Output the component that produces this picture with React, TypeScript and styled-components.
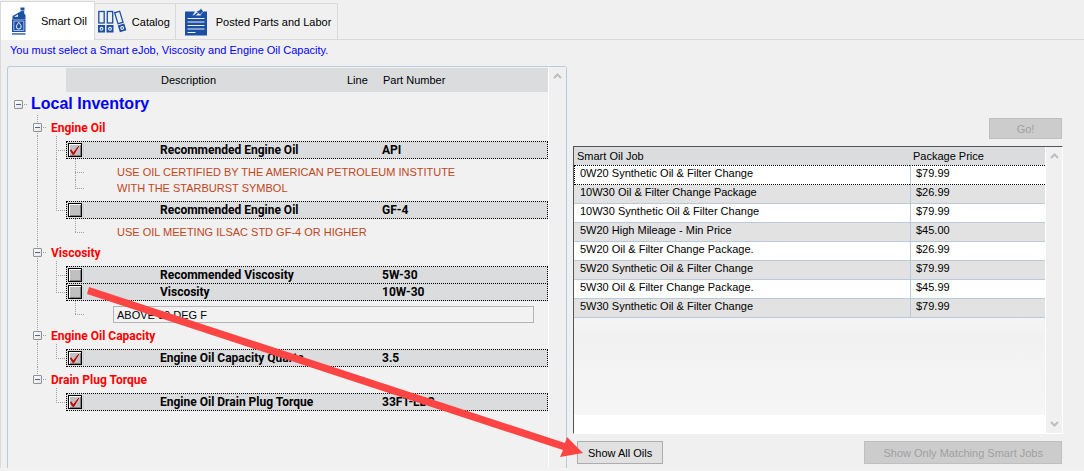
import React, { useState } from 'react';
import styled, { createGlobalStyle, css } from 'styled-components';

const GlobalStyle = createGlobalStyle`
  *, *::before, *::after { box-sizing: border-box; }
  body {
    margin: 0;
    background: #f0f0f0;
    color: #000;
    font: 11px/16px "Liberation Sans", Arial, sans-serif;
  }
  button, input { font: inherit; color: inherit; margin: 0; }
`;

/* ---------- window frame and tabs ---------- */

const Page = styled.div`
  position: relative;
  display: flex;
  flex-direction: column;
  min-height: 100vh;
  padding-bottom: 3px;
  background: #f2f2f2;
`;

const TabBar = styled.div`
  display: flex;
  align-items: flex-end;
  height: 40px;
  background: #f0f0f0;
  box-shadow: inset 0 -1px #d9d9d9;
`;

const Tab = styled.button<{ $active?: boolean }>`
  display: flex;
  align-items: center;
  height: 37px;
  padding: 0 5px 0 3px;
  border: 1px solid #d9d9d9;
  border-left: 0;
  background: #f0f0f0;
  gap: 4px;
  white-space: nowrap;
  ${(p) =>
    p.$active &&
    css`
      height: 39px;
      padding: 0 7px 0 8px;
      border-left: 1px solid #d9d9d9;
      border-bottom: 0;
      background: #fff;
      gap: 12px;
    `}
`;

const WideTab = styled(Tab)`
  padding: 0 6px 0 9px;
  gap: 8px;
`;

const TabPage = styled.main`
  flex: 1;
  display: flex;
  flex-direction: column;
  border-left: 1px solid #d9d9d9;
  background: #f0f0f0;
`;

const Message = styled.p`
  margin: 0;
  padding: 2px 9px 8px;
  color: #0000ff;
`;

const Columns = styled.div`
  flex: 1;
  display: flex;
`;

/* ---------- inventory tree ---------- */

const TreePanel = styled.section`
  flex: 0 1 560px;
  display: flex;
  margin-left: 6px;
  border: 1px solid #b8cbdc;
  border-bottom: 0;
  border-radius: 3px 3px 0 0;
  background: #f1f1f1;
`;

const Tree = styled.div`
  flex: 1;
  min-width: 0;
  padding: 1px 0 0 1px;
`;

const fields = css`
  display: grid;
  grid-template-columns: 92px 186fr 36px 165fr;
  align-items: center;
`;

const TreeHeader = styled.div`
  ${fields}
  height: 24px;
  margin-left: 57px;
  padding: 0 0 0 3px;
  background: #dadcde;
`;

const Line = styled.div`
  display: flex;
`;

const dots = (dir: string) =>
  `repeating-linear-gradient(${dir}, #a0a0a0 0 1px, transparent 1px 2px)`;

const Guide = styled.span<{ $down?: 'full' | 'end'; $across?: number }>`
  flex: 0 0 19px;
  background-repeat: no-repeat;
  background-image: ${(p) => (p.$down ? dots('to bottom') : 'none')},
    ${(p) => (p.$across !== undefined ? dots('to right') : 'none')};
  background-size: 1px ${(p) => (p.$down === 'end' ? `${p.$across}px` : '100%')}, 10px 1px;
  background-position: 9px 0, 9px ${(p) => p.$across ?? 0}px;
`;

const ExpanderGuide = styled(Guide)`
  padding: 8px 0 0 5px;
  line-height: 0;
`;

const Expander = styled.button`
  width: 9px;
  height: 9px;
  padding: 0;
  border: 1px solid #919191;
  border-radius: 1px;
  background: linear-gradient(#4b63a7, #4b63a7) center / 5px 1px no-repeat,
    linear-gradient(135deg, #fff, #e2e2e2);
`;

const Root = styled.h1`
  margin: 0;
  padding-left: 3px;
  color: #0000ff;
  font-size: 16px;
  font-weight: 700;
  line-height: 23px;
`;

const GroupName = styled.h2`
  margin: 0;
  padding: 5px 0 0 4px;
  color: #ff0000;
  font: 700 12px/16px Roboto, sans-serif;
`;

const Item = styled.label<{ $joined?: boolean }>`
  ${fields}
  flex: 1;
  height: ${(p) => (p.$joined ? '17px' : '18px')};
  margin-top: ${(p) => (p.$joined ? '0' : '5px')};
  padding-left: 1px;
  border: 1px dotted #000;
  border-top-width: ${(p) => (p.$joined ? '0' : '1px')};
  background: #dadcde;
  font: 700 12px/16px Roboto, sans-serif;
`;

const Check = styled.span`
  display: grid;
  width: 16px;
  height: 14px;
  border-right: 1px solid #c3d3d3;

  > * { grid-area: 1 / 1; }
  > svg { z-index: 1; pointer-events: none; visibility: hidden; }
  > input:checked + svg { visibility: visible; }
`;

const CheckInput = styled.input`
  appearance: none;
  width: 14px;
  height: 14px;
  border: 1px solid #000;
  background: #c0c0c0;
  box-shadow: inset 1px 1px #fff, inset -1px -1px #808080;
`;

const PartNumber = styled.span`
  grid-column: 4;
`;

const Notes = styled.div<{ $first?: boolean }>`
  flex: 1;
  padding: ${(p) => (p.$first ? '5px' : '0')} 0 0 32px;
  color: #c2461b;
`;

const BoxedNote = styled.input`
  flex: 1;
  min-width: 0;
  height: 17px;
  margin: 5px 14px 0 28px;
  padding: 0 3px;
  border: 1px solid #b4b4b4;
  background: #f2f2f2;
`;

/* ---------- scroll bar ---------- */

const ScrollBar = styled.div`
  display: flex;
  flex-direction: column;
  justify-content: space-between;
  align-items: center;
  flex: 0 0 17px;
  padding: 5px 0;
  border-left: 1px solid #fff;
  background: #f0f0f0;
`;

const TreeScrollBar = styled(ScrollBar)`
  flex-basis: 18px;
`;

const Chevron = ({ down }: { down?: boolean }) => (
  <svg width="9" height="8" viewBox="0 0 9 8" fill="none" stroke="#bdbdbd" strokeWidth="2">
    <path d={down ? 'M1 2 L4.5 5.5 L8 2' : 'M1 6 L4.5 2.5 L8 6'} />
  </svg>
);

/* ---------- oil jobs ---------- */

const JobsPanel = styled.section`
  flex: 1;
  display: flex;
  flex-direction: column;
  min-width: 0;
  padding: 52px 21px 4px 6px;
`;

const PushButton = styled.button<{ $wide?: boolean }>`
  height: 23px;
  padding: 0 ${(p) => (p.$wide ? '18px' : '10px')};
  border: 1px solid #adadad;
  background: #e1e1e1;
  white-space: nowrap;

  &:disabled {
    border-color: #bfbfbf;
    background: #cccccc;
    color: #a0a0a0;
  }
`;

const GoButton = styled(PushButton)`
  align-self: flex-end;
  width: 73px;
  height: 21px;
  margin-right: 1px;
`;

const JobsBox = styled.div`
  flex: 1;
  display: flex;
  margin-top: 7px;
  border: 1px solid #555;
  border-right-color: #fff;
  border-bottom-color: #fff;
  background: #fff;
`;

const JobsArea = styled.div`
  flex: 1;
  display: flex;
  flex-direction: column;
  min-width: 0;
  padding-bottom: 18px;
`;

const JobsFill = styled.div`
  flex: 1;
  background: linear-gradient(#f5f5f5, #f1f1f1 20%, #f6f6f6);
`;

const JobsTable = styled.table`
  width: 100%;
  border-collapse: separate;
  border-spacing: 0;
  table-layout: fixed;

  th {
    height: 18px;
    padding: 0 3px;
    background: #dadcde;
    font-weight: 400;
    text-align: left;
  }
  th:last-child { width: 135px; }
  td {
    height: 19px;
    padding: 0 6px 4px;
    border-bottom: 1px solid #b9cadb;
    line-height: 14px;
  }
  td:last-child { border-left: 1px solid #b9cadb; padding-left: 5px; }
  tbody tr:nth-child(even) { background: #e2e2e2; }
  tbody tr:first-child td {
    border-top: 1px dotted #000;
    border-bottom: 1px dotted #000;
  }
  tbody tr:first-child td:first-child { border-left: 1px dotted #000; padding-left: 5px; }
`;

const Actions = styled.div`
  display: flex;
  justify-content: space-between;
  padding: 7px 1px 0 4px;
`;

const ArrowLayer = styled.svg`
  position: absolute;
  left: 0;
  top: 0;
  pointer-events: none;
`;

/* ---------- icons ---------- */

const BLUE = '#1b4fa3';

const OilIcon = () => (
  <svg width="20" height="30" viewBox="0 0 20 30" fill={BLUE}>
    <path d="M11.500 1.500h4v3h-4z" />
    <path d="M12.200 5h3v2.500L16.500 9v4h-13V10L9 7z" />
    <path d="M5 10.800 9 8.500v2.300z" fill="#fff" />
    <path d="M3 13.300h13.500V26H3z" />
    <path d="M4.800 15h10v9.500h-10z" fill="none" stroke="#b9c8e6" strokeWidth=".9" />
    <path d="M9.800 16.300c1.600 2.200 2.400 3.200 2.400 4.400a2.400 2.400 0 0 1-4.800 0c0-1.200.800-2.200 2.400-4.400z" fill="none" stroke="#fff" strokeWidth="1" />
    <path d="M3 27.300h13.500v1.300H3z" />
  </svg>
);

const CatalogIcon = () => (
  <svg width="30" height="24" viewBox="0 0 30 24" fill="none" stroke={BLUE} strokeWidth="1.300">
    <rect x=".8" y="1.500" width="5.400" height="11.500" />
    <path d="M0 15h7v7.500H0z" fill={BLUE} stroke="none" />
    <circle cx="3.500" cy="18.800" r="1.400" stroke="#f0f0f0" strokeWidth="1.100" />
    <rect x="9.300" y="1.500" width="5.400" height="11.500" />
    <path d="M8.500 15h7v7.500h-7z" fill={BLUE} stroke="none" />
    <circle cx="12" cy="18.800" r="1.400" stroke="#f0f0f0" strokeWidth="1.100" />
    <g transform="translate(16 3) rotate(-17)">
      <rect x=".7" y="0" width="5.200" height="11.500" />
      <path d="M0 13h6.800v7.200H0z" fill={BLUE} stroke="none" />
      <circle cx="3.400" cy="16.700" r="1.400" stroke="#f0f0f0" strokeWidth="1.100" />
    </g>
  </svg>
);

const PostedIcon = () => (
  <svg width="23" height="28" viewBox="0 0 23 28">
    <path d="M0 3.500h10L7.500 7.500h8L15.500 5.500l2-2H22v24H0z" fill={BLUE} />
    <path d="M8.500 8.500 13 4.500" stroke={BLUE} strokeWidth="1.600" />
    <path d="M11 3.500 15.500 7l1-2 2-1.500L16 .5l-2.200 2z" fill={BLUE} stroke="#f0f0f0" strokeWidth=".6" />
    <path d="M2.500 10.500h17M2.500 14h17M2.500 17.500h17M2.500 21h17M2.500 24.500h8" stroke="#f0f0f0" strokeWidth="1.200" />
  </svg>
);

const Tick = () => (
  <svg width="14" height="14" viewBox="0 0 14 14">
    <path d="M3 6.800 5.300 10 10.800 3 5.800 11.500H4.800L2.500 7.500z" fill="#e00000" stroke="#c00000" strokeWidth=".9" />
  </svg>
);

/* ---------- data ---------- */

type Part = { name: string; part: string; checked?: boolean; notes?: string[]; boxed?: string };
type Group = { name: string; parts: Part[] };

const groups: Group[] = [
  {
    name: 'Engine Oil',
    parts: [
      {
        name: 'Recommended Engine Oil',
        part: 'API',
        checked: true,
        notes: ['USE OIL CERTIFIED BY THE AMERICAN PETROLEUM INSTITUTE', 'WITH THE STARBURST SYMBOL'],
      },
      { name: 'Recommended Engine Oil', part: 'GF-4', notes: ['USE OIL MEETING ILSAC STD GF-4 OR HIGHER'] },
    ],
  },
  {
    name: 'Viscosity',
    parts: [
      { name: 'Recommended Viscosity', part: '5W-30' },
      { name: 'Viscosity', part: '10W-30', boxed: 'ABOVE 30 DEG F' },
    ],
  },
  { name: 'Engine Oil Capacity', parts: [{ name: 'Engine Oil Capacity Quarts', part: '3.5', checked: true }] },
  { name: 'Drain Plug Torque', parts: [{ name: 'Engine Oil Drain Plug Torque', part: '33FT-LBS', checked: true }] },
];

const jobs: [string, string][] = [
  ['0W20 Synthetic Oil & Filter Change', '$79.99'],
  ['10W30 Oil & Filter Change Package', '$26.99'],
  ['10W30 Synthetic Oil & Filter Change', '$79.99'],
  ['5W20 High Mileage - Min Price', '$45.00'],
  ['5W20 Oil & Filter Change Package.', '$26.99'],
  ['5W20 Synthetic Oil & Filter Change', '$79.99'],
  ['5W30 Oil & Filter Change Package.', '$45.99'],
  ['5W30 Synthetic Oil & Filter Change', '$79.99'],
];

function PartLines({ part, lastGroup, last, joined }: { part: Part; lastGroup: boolean; last: boolean; joined: boolean }) {
  const outer = (
    <>
      <Guide />
      <Guide $down={lastGroup ? undefined : 'full'} />
    </>
  );
  const inner = <Guide $down={last ? undefined : 'full'} />;
  return (
    <>
      <Line>
        {outer}
        <Guide $down={last ? 'end' : 'full'} $across={joined ? 8 : 14} />
        <Item $joined={joined}>
          <Check>
            <CheckInput type="checkbox" defaultChecked={part.checked} />
            <Tick />
          </Check>
          <span>{part.name}</span>
          <PartNumber>{part.part}</PartNumber>
        </Item>
      </Line>
      {part.notes?.map((note, i, all) => (
        <Line key={note}>
          {outer}
          {inner}
          <Guide $down={i === all.length - 1 ? 'end' : 'full'} $across={i === 0 ? 13 : 8} />
          <Notes $first={i === 0}>{note}</Notes>
        </Line>
      ))}
      {part.boxed && (
        <Line>
          {outer}
          {inner}
          <Guide $down="end" $across={13} />
          <BoxedNote aria-label={`${part.name} note`} defaultValue={part.boxed} />
        </Line>
      )}
    </>
  );
}

function GroupLines({ group, last }: { group: Group; last: boolean }) {
  const [open, setOpen] = useState(true);
  return (
    <>
      <Line>
        <Guide />
        <ExpanderGuide $down={last ? 'end' : 'full'} $across={12}>
          <Expander aria-label={group.name} aria-expanded={open} onClick={() => setOpen(!open)} />
        </ExpanderGuide>
        <GroupName>{group.name}</GroupName>
      </Line>
      {open &&
        group.parts.map((part, i) => (
          <PartLines
            key={part.part}
            part={part}
            lastGroup={last}
            last={i === group.parts.length - 1}
            joined={i > 0 && !group.parts[i - 1].notes}
          />
        ))}
    </>
  );
}

export default function App() {
  const [open, setOpen] = useState(true);
  return (
    <Page>
      <GlobalStyle />
      <TabBar role="tablist">
        <Tab role="tab" aria-selected $active>
          <OilIcon />
          Smart Oil
        </Tab>
        <Tab role="tab" aria-selected={false}>
          <CatalogIcon />
          Catalog
        </Tab>
        <WideTab role="tab" aria-selected={false}>
          <PostedIcon />
          Posted Parts and Labor
        </WideTab>
      </TabBar>
      <TabPage>
        <Message>You must select a Smart eJob, Viscosity and Engine Oil Capacity.</Message>
        <Columns>
          <TreePanel>
            <Tree>
              <TreeHeader>
                <span />
                <span>Description</span>
                <span>Line</span>
                <span>Part Number</span>
              </TreeHeader>
              <Line>
                <ExpanderGuide $across={12}>
                  <Expander aria-label="Local Inventory" aria-expanded={open} onClick={() => setOpen(!open)} />
                </ExpanderGuide>
                <Root>Local Inventory</Root>
              </Line>
              {open && groups.map((g, i) => <GroupLines key={g.name} group={g} last={i === groups.length - 1} />)}
            </Tree>
            <TreeScrollBar>
              <Chevron />
            </TreeScrollBar>
          </TreePanel>
          <JobsPanel>
            <GoButton disabled>Go!</GoButton>
            <JobsBox>
              <JobsArea>
                <JobsTable>
                  <thead>
                    <tr>
                      <th>Smart Oil Job</th>
                      <th>Package Price</th>
                    </tr>
                  </thead>
                  <tbody>
                    {jobs.map(([name, price]) => (
                      <tr key={name}>
                        <td>{name}</td>
                        <td>{price}</td>
                      </tr>
                    ))}
                  </tbody>
                </JobsTable>
                <JobsFill />
              </JobsArea>
              <ScrollBar>
                <Chevron />
                <Chevron down />
              </ScrollBar>
            </JobsBox>
            <Actions>
              <PushButton>Show All Oils</PushButton>
              <PushButton $wide disabled>
                Show Only Matching Smart Jobs
              </PushButton>
            </Actions>
          </JobsPanel>
        </Columns>
      </TabPage>
      <ArrowLayer width="600" height="470" viewBox="0 0 600 470" fill="#ff4444">
        <path d="M89 287 L565 443 L567 437 L583 453 L560 457 L563 450 L87 294 Z" />
      </ArrowLayer>
    </Page>
  );
}
